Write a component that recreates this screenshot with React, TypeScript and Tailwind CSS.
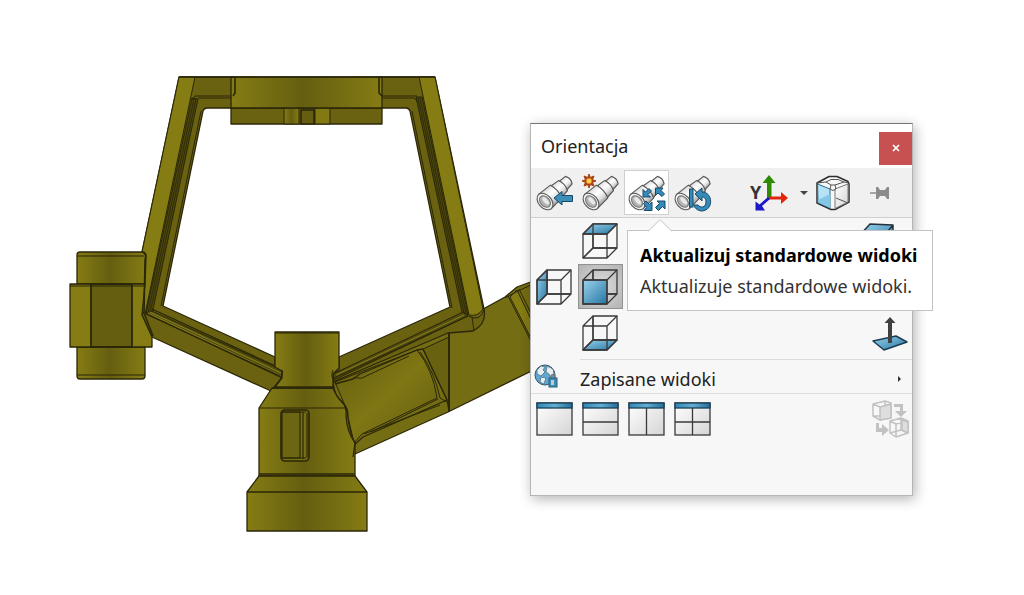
import type { ReactNode } from 'react';

const INK = '#2b2708';

/* Shared gradients, referenced by id from the icons and the model */
const Gradients = () => (
  <svg width="0" height="0" className="absolute" aria-hidden="true">
    <defs>
      <linearGradient id="blue" x1="0" y1="0" x2="1" y2="1">
        <stop offset="0" stopColor="#9bd2ec" />
        <stop offset="1" stopColor="#2476a3" />
      </linearGradient>
      <linearGradient id="bar" x1="0" y1="0" x2="1" y2="0">
        <stop offset="0" stopColor="#2f86b5" />
        <stop offset="0.5" stopColor="#62aed3" />
        <stop offset="1" stopColor="#246f9b" />
      </linearGradient>
      <linearGradient id="silver" x1="0" y1="0" x2="0" y2="1">
        <stop offset="0" stopColor="#dcdcdc" />
        <stop offset="0.4" stopColor="#ffffff" />
        <stop offset="0.7" stopColor="#e2e2e2" />
        <stop offset="1" stopColor="#999999" />
      </linearGradient>
      <linearGradient id="pane" x1="0" y1="0" x2="1" y2="1">
        <stop offset="0" stopColor="#ffffff" />
        <stop offset="1" stopColor="#d5d5d5" />
      </linearGradient>
      <linearGradient id="olive" x1="0" y1="0" x2="1" y2="0">
        <stop offset="0" stopColor="#857c14" />
        <stop offset="0.48" stopColor="#655e10" />
        <stop offset="1" stopColor="#857c14" />
      </linearGradient>
      <linearGradient id="oliveSlope" x1="0" y1="0" x2="1" y2="1">
        <stop offset="0" stopColor="#635c0f" />
        <stop offset="0.5" stopColor="#7f7614" />
        <stop offset="1" stopColor="#655e10" />
      </linearGradient>
    </defs>
  </svg>
);

const Model = () => (
  <svg viewBox="0 0 1024 595" className="block h-auto w-full" role="img" aria-label="Model" stroke={INK} strokeWidth="1.3" strokeLinejoin="round" fill="none">
    {/* Side arm, running behind the panel */}
    <path d="M333 382 L448 331 L485 308 L505 297 L517 287 L560 271 V357 L448 412 L355 454 L340 420Z" fill="#756d13" />
    <path d="M510 297 L517 290 L560 380 V395Z" fill="#857c14" strokeWidth="1" />
    <path d="M508 296 L560 398 M519 289 L560 372 M505 298 L518 291 L535 283" strokeWidth="1" />
    <path d="M531 372 L570 352 V400 L531 420Z" fill="#fff" stroke="none" />
    <path d="M423 349 L449 337 V412 L447 400Z" fill="#686110" strokeWidth="1" />
    <path d="M449 333 V412" strokeWidth="2" />

    {/* Pocket in the arm */}
    <path d="M335 382 L417 350 Q433 370 437 398 L362 434 L354 443 L346 408Z" fill="url(#oliveSlope)" strokeWidth="1" />
    <path d="M335 384 L353 379 L360 374 L417 350 L423 349 L447 400 L363 437 L354 445" />
    <path d="M353 378 H362 L409 356 M420 352 Q435 373 440 398 L447 402 M371 432 L438 399 M364 434 L440 405" strokeWidth="1" />

    {/* Frame: left leg */}
    <path d="M179 77 H234 V108 H207 Q204 108 203 111 L163 306 L275 357 V372 L282 378 L271 391 L152 337 L142 315 L142 252Z" fill="#6a6210" />
    <path d="M179 77 H195 L145 314 L142 312 V252Z" fill="#857c14" strokeWidth="1" />
    <path d="M192 98 L146 313 L152 314 L198 99Z" fill="#4e480d" strokeWidth="1" />
    <path d="M194 99 L148 313 M196 99 L150 313" strokeWidth="0.8" />
    <path d="M234 96 H195 L192 100 M234 98 H198 M201 111 L161 306" strokeWidth="1" />
    <path d="M145 313 L152 311 L282 370 L282 378Z" fill="#514b0d" strokeWidth="1" />
    <path d="M150 312 L281 373 M148 313 L281 376" strokeWidth="1" stroke="#8a8120" />
    <path d="M146 314 L282 377 M152 309 L282 369 L283 376 L271 391" strokeWidth="1.2" />

    {/* Frame: right leg */}
    <path d="M380 77 H435 L484 309 Q487 324 473 331 L448 333 L333 382 V374 L339 370 V357 L450 307 L410 111 Q409 108 406 108 H380Z" fill="#6a6210" />
    <path d="M419 77 H435 L483 309 Q478 317 469 315Z" fill="#857c14" strokeWidth="1" />
    <path d="M416 97 L462 312 L468 315 L422 97Z" fill="#4e480d" strokeWidth="1" />
    <path d="M418 98 L464 313 M420 98 L466 314" strokeWidth="0.8" />
    <path d="M380 96 H417 M380 98 H414 L418 102 M412 111 L452 308" strokeWidth="1" />
    <path d="M333 374 L463 312 L468 316 L334 380Z" fill="#514b0d" strokeWidth="1" />
    <path d="M336 375 L464 315" stroke="#8a8120" strokeWidth="1" />
    <path d="M334 378 L468 316 Q480 322 484 310 M472 317 L474 331" strokeWidth="1" />

    {/* Top block and its lug */}
    <rect x="231" y="108" width="151" height="16" fill="#6a6210" />
    <rect x="284" y="108" width="15" height="16" fill="url(#olive)" strokeWidth="1" />
    <rect x="301" y="110" width="13" height="14" fill="#655e10" strokeWidth="1.6" />
    <rect x="315" y="108" width="15" height="16" fill="#827913" strokeWidth="1" />
    <rect x="231" y="77" width="151" height="31" fill="url(#olive)" />
    <path d="M235 77 V93 L233 96 M379 77 V93 L382 96 M179 77 H435" strokeWidth="1.6" />

    {/* Left boss */}
    <path d="M77 284 V255 Q77 252 80 252 H142 Q146 252 146 256 L145 284Z" fill="url(#olive)" />
    <path d="M77 347 V376 Q77 379 80 379 H142 Q145 379 145 376 V347Z" fill="url(#olive)" />
    <path d="M77 256 H144 M77 375 H145" strokeWidth="1" />
    <path d="M70 284 H145 L142 315 L152 337 V347 H70Z" fill="#857c14" />
    <rect x="91" y="284" width="41" height="63" fill="#655e10" strokeWidth="1.8" />
    <path d="M70 286 H145" strokeWidth="1" />
    <path d="M142 252 Q147 253 145 260 L144 313 L153 336" strokeWidth="1.6" />

    {/* Centre body */}
    <path d="M275 332 H339 V368 L333 374 L333 387 H275 L282 378 V371 L275 367Z" fill="url(#olive)" />
    <path d="M275 333 H339 M282 370 Q284 375 279 381 M333 370 Q330 376 335 383" strokeWidth="1" />
    <path d="M272 388 H333 Q336 396 342 402 Q347 407 346 416 Q347 432 355 443 V476 H259 V408Z" fill="url(#olive)" />
    <path d="M259 408 H345 M333 385 Q335 396 342 402 Q349 408 348 418 Q350 434 355 443 L353 457" strokeWidth="1.2" />
    <path d="M259 476 H355 L367 492 V531 H247 V492Z" fill="url(#olive)" />
    <path d="M272 388 H333 M259 474 H355 M247 492 H367" strokeWidth="1.7" />

    {/* Slot */}
    <rect x="281" y="410" width="28" height="51" rx="4" fill="#776f13" strokeWidth="1.6" />
    <rect x="282" y="412" width="18" height="46" fill="#6c6511" strokeWidth="1.2" />
    <path d="M303 412 V459 M307 413 V458 M282 412 H306 M282 458 H306" strokeWidth="1.2" />
  </svg>
);

const Icon = ({ children, className = 'size-[38px]' }: { children: ReactNode; className?: string }) => (
  <svg viewBox="0 0 38 38" className={className} aria-hidden="true">
    {children}
  </svg>
);

const Scope = () => (
  <g transform="translate(9 27.500) rotate(-42)" stroke="#555" strokeWidth="1.1" strokeLinejoin="round">
    <path d="M23 -5.500 L32 -5 Q35 0 32 5 L23 6Z" fill="url(#silver)" />
    <path d="M14 -7.500 L24 -6.500 Q27 0 24 7 L14 8Z" fill="url(#silver)" />
    <path d="M0 -9.500 L15 -8.500 Q18 0 15 8.500 L0 9.500Z" fill="url(#silver)" />
    <ellipse rx="6.500" ry="9.500" fill="#f1f1f1" />
    <ellipse rx="4.500" ry="6.500" fill="#b4b4b4" stroke="#777" />
    <ellipse cx="1" rx="2" ry="4.500" fill="#e9e9e9" stroke="none" />
  </g>
);

const PreviousViewIcon = () => (
  <Icon>
    <Scope />
    <path d="M18 24 L26 17.500 V21.500 H36.500 V27.500 H26 V31Z" fill="#3d8fba" stroke="#174a68" />
  </Icon>
);

const NewViewIcon = () => (
  <Icon>
    <Scope />
    <path d="M7 0 L8.300 3.500 L12 2 L10.500 5.700 L14 7 L10.500 8.300 L12 12 L8.300 10.500 L7 14 L5.700 10.500 L2 12 L3.500 8.300 L0 7 L3.500 5.700 L2 2 L5.700 3.500Z" fill="#a83f14" stroke="#a83f14" />
    <circle cx="7" cy="7" r="2.700" fill="#ffd052" stroke="#e08a24" />
  </Icon>
);

const UpdateViewsIcon = () => (
  <Icon>
    <Scope />
    <g fill="#348ab8" stroke="#174a68" strokeWidth="1">
      <path d="M15 23 V15.500 L17.500 18 L21 14.500 L23.500 17 L20 20.500 L22.500 23Z" />
      <path d="M27.500 14 H35 L33 16.500 L36.500 20 L34 22.500 L30 19 L27.500 21.500Z" />
      <path d="M15.500 29.500 L18 27 L21.500 30.500 L24 28 V36.500 H16 L18.500 33.500Z" />
      <path d="M37 27 V35 L34.500 32.500 L30.500 36.500 L27.500 33.500 L31.500 29.500 L29 27Z" />
    </g>
  </Icon>
);

const ResetViewsIcon = () => (
  <Icon>
    <Scope />
    <rect x="15.500" y="15" width="3.500" height="18" fill="#348ab8" stroke="#174a68" />
    <path d="M21 20 L28 14 V18 C39 18 40 36 28 37 C23 37 20 33 20 31 H24 C26 34 32 34 32 28 C32 24 30 23 28 23 V27Z" fill="#348ab8" stroke="#174a68" />
  </Icon>
);

const AxisIcon = () => (
  <Icon>
    <text x="0" y="25" fontSize="18" fontWeight="700" fill="#333">Y</text>
    <path d="M17 25 V9 H12.500 L19 1 L25.500 9 H21.500 V25Z" fill="#2f8a00" />
    <path d="M19 22.500 H31 V18 L38 24 L31 30 V25.500 H19Z" fill="#e3260b" />
    <path d="M18 23 L20 25 L12 32 L15 36.500 H5.500 V27.500 L9.500 30.500Z" fill="#1a1ac8" />
  </Icon>
);

const ViewSelectorIcon = () => (
  <Icon>
    <path d="M3 9 L15 2.500 H23 L34 7.500 L35 10 V28 L21 35.500 H17 L3 29Z" fill="#f7f7f7" stroke="#2d2d2d" strokeWidth="1.500" strokeLinejoin="round" />
    <path d="M3.500 10 L16 15 V34 L4 28.500Z" fill="#b6e2f5" stroke="#286b8b" />
    <path d="M4 26 L16 20 V34 L4 28.500Z" fill="#83c6e5" />
    <path d="M21 15 L34 10 V28 L21 34.500Z" fill="url(#pane)" stroke="#777" />
    <path d="M16 15 L17 11 H21 L22 15 L19 16.500Z M3.500 9 L12 8 L17 11 M21 11 L30 8 L34.500 9 M12 8 L17 5.500 H24 L30 8 M22 24 L34 29" fill="none" stroke="#555" />
  </Icon>
);

const PinIcon = () => (
  <svg viewBox="0 0 20 14" className="h-[14px] w-[20px]" aria-hidden="true">
    <path d="M0 7 H7" stroke="#8b8b8b" strokeWidth="1.500" />
    <path d="M6 1 H8 L10 4 H15 L17 1 H19 V13 H17 L15 10 H10 L8 13 H6Z" fill="#8b8b8b" />
  </svg>
);

/* Wireframe cube with one face filled; a solid front hides the edges behind it */
const CubeIcon = ({ face, solid }: { face: string; solid?: boolean }) => (
  <Icon>
    <g stroke="#3a3a3a" strokeWidth="1.300" strokeLinejoin="round" fill="none">
      <path d="M11 2 H35 V26 H11Z M1 36 L11 26" />
      {!solid && <path d={face} fill="url(#blue)" />}
      <path d="M11 2 V26 H35 M1 36 L11 26" />
      {solid && <path d={face} fill="url(#blue)" />}
      <path d="M1 12 H25 V36 H1Z M1 12 L11 2 M25 12 L35 2 M25 36 L35 26" />
    </g>
  </Icon>
);

const TOP = 'M1 12 L11 2 H35 L25 12Z';
const LEFT = 'M1 12 L11 2 V26 L1 36Z';
const FRONT = 'M1 12 H25 V36 H1Z';
const BOTTOM = 'M1 36 L11 26 H35 L25 36Z';

const NormalToIcon = () => (
  <Icon>
    <path d="M2 27 L25 22 L36 28 L13 36Z" fill="url(#blue)" stroke="#1c3d50" strokeWidth="1.500" strokeLinejoin="round" />
    <path d="M17 29 V9 H13.500 L19 3 L24.500 9 H21 V29Z" fill="#404040" />
  </Icon>
);

const GlobeLockIcon = () => (
  <svg viewBox="0 0 24 24" className="size-6" aria-hidden="true">
    <circle cx="11" cy="11" r="10" fill="#5ea9d3" stroke="#31566b" />
    <path d="M3 6 L7 2 L11 3 L9 6 L11 8 L7 12 L3 10Z M13 2 L19 5 L20 10 L17 14 L15 10 L12 8Z M7 13 L12 14 L10 20 L6 18Z" fill="#e7eef1" stroke="#52717f" strokeWidth="0.800" />
    <path d="M17 15 V12 Q19 9 21 12 V15" fill="none" stroke="#777" strokeWidth="1.500" />
    <rect x="15" y="14" width="8" height="9" fill="#3b8db7" stroke="#285f7d" />
    <rect x="17" y="16" width="3" height="5" fill="#c9c9c9" />
  </svg>
);

const ViewportIcon = ({ split }: { split: string }) => (
  <Icon>
    <rect x="1" y="3" width="35" height="32" fill="url(#pane)" stroke="#3a3a3a" strokeWidth="1.300" />
    <rect x="1" y="3" width="35" height="5" fill="url(#bar)" stroke="#1c3f54" strokeWidth="1.300" />
    <path d={split} stroke="#3a3a3a" strokeWidth="1.300" />
  </Icon>
);

const LinkViewsIcon = () => (
  <Icon>
    <g fill="none" stroke="#c2c2c2" strokeWidth="1.500" strokeLinejoin="round">
      <path d="M2 4 L14 1 L20 3 V18 L9 20 L2 16Z M2 4 L9 7 L20 4 M14 1 V16 L2 16" />
      <path d="M9 7 L20 4 V18 L9 20Z" fill="#dedede" />
      <path d="M19 21 L30 18 L37 21 V33 L25 37 L19 33Z M19 21 L25 24 L37 21 M25 24 V37 M30 18 V30 L19 33 M30 30 L37 33" />
      <path d="M31 20 L37 22 V33 L31 30Z" fill="#dedede" />
    </g>
    <path d="M23 4 H32 V11 H36 L30 17 L24 11 H29 V7 H23Z M5 23 H8 V28 H11 V24 L18 30 L11 36 V32 H5Z" fill="#c2c2c2" />
  </Icon>
);

const ToolButton = ({ label, active, children }: { label: string; active?: boolean; children: ReactNode }) => (
  <button
    type="button"
    aria-label={label}
    className={
      active
        ? 'flex size-[45px] shrink-0 items-center justify-center border border-[#cfcfcf] bg-white'
        : 'flex size-[45px] shrink-0 items-center justify-center'
    }
  >
    {children}
  </button>
);

const Tooltip = () => (
  <div role="tooltip" className="absolute top-[106px] left-24 z-10 border border-[#c3c3c3] bg-white pt-[9px] pr-[14px] pb-2 pl-3 text-lg leading-[31px] whitespace-nowrap">
    <svg viewBox="0 0 24 13" className="absolute -top-3 left-5 h-[13px] w-6" aria-hidden="true">
      <path d="M0 12.500 L12 0.500 L24 12.500" fill="#fff" stroke="#c3c3c3" />
    </svg>
    <p className="font-bold text-black">Aktualizuj standardowe widoki</p>
    <p className="text-[#333]">Aktualizuje standardowe widoki.</p>
  </div>
);

const OrientationPanel = () => (
  <section
    aria-labelledby="orientation-title"
    className="absolute top-[123px] left-[530px] w-[383px] border border-[#b5b5b5] border-t-[#757575] bg-[#f7f7f7] shadow-[2px_3px_12px_rgba(0,0,0,0.3)]"
  >
    <header className="flex h-11 items-center justify-between bg-white pl-[10px]">
      <h1 id="orientation-title" className="text-lg text-[#222]">Orientacja</h1>
      <button type="button" aria-label="Zamknij" className="mt-1 flex size-[33px] items-center justify-center bg-[#c75050]">
        <svg viewBox="0 0 8 8" className="size-2" aria-hidden="true">
          <path d="M1 1 L7 7 M7 1 L1 7" stroke="#fff" strokeWidth="1.700" />
        </svg>
      </button>
    </header>

    <div className="flex h-[50px] items-center gap-px border-b border-[#cfcfcf] bg-[#f0f0f0] pl-px">
      <ToolButton label="Poprzedni widok"><PreviousViewIcon /></ToolButton>
      <ToolButton label="Nowy widok"><NewViewIcon /></ToolButton>
      <ToolButton label="Aktualizuj standardowe widoki" active><UpdateViewsIcon /></ToolButton>
      <ToolButton label="Resetuj standardowe widoki"><ResetViewsIcon /></ToolButton>
      <div className="ml-auto flex items-center pr-[22px]">
        <button type="button" aria-label="Oś" className="flex items-center gap-3">
          <AxisIcon />
          <svg viewBox="0 0 8 4" className="h-1 w-2" aria-hidden="true"><path d="M0 0 H8 L4 4Z" fill="#444" /></svg>
        </button>
        <button type="button" aria-label="Selektor widoku" className="ml-[6px]">
          <ViewSelectorIcon />
        </button>
        <button type="button" aria-label="Przypnij" className="ml-[18px]"><PinIcon /></button>
      </div>
    </div>

    <div className="flex justify-between pl-px">
      <div className="grid grid-cols-[45px_45px] gap-px">
        <div className="col-start-2"><ToolButton label="Góra"><CubeIcon face={TOP} /></ToolButton></div>
        <div className="col-start-1"><ToolButton label="Lewo"><CubeIcon face={LEFT} /></ToolButton></div>
        <button type="button" aria-label="Przód" aria-pressed="true" className="flex size-[45px] items-center justify-center border border-[#929292] bg-[#bdbdbd] bg-radial from-[#dedede] to-[#b3b3b3]">
          <CubeIcon face={FRONT} solid />
        </button>
        <div className="col-start-2"><ToolButton label="Dół"><CubeIcon face={BOTTOM} /></ToolButton></div>
      </div>
      <div className="flex flex-col items-end justify-between">
        <div className="pr-[14px]">
          <ToolButton label="Izometryczny">
            <Icon>
              <path d="M2 14 L13 2 L36 3 L27 14Z M27 14 L36 3 V26 L27 36Z M2 14 H27 V36 H2Z" fill="url(#blue)" stroke="#24313a" strokeWidth="1.500" strokeLinejoin="round" />
            </Icon>
          </ToolButton>
        </div>
        <ToolButton label="Normalny do"><NormalToIcon /></ToolButton>
      </div>
    </div>

    <div className="mt-1 flex h-[35px] items-center border-b border-[#dcdcdc] pl-[3px]">
      <GlobeLockIcon />
      <button type="button" className="ml-[22px] flex h-full flex-1 items-center justify-between border-t border-[#dcdcdc] pt-1 pr-[11px] text-lg text-[#222]">
        Zapisane widoki
        <svg viewBox="0 0 3 6" className="h-[6px] w-[3px]" aria-hidden="true"><path d="M0 0 V6 L3 3Z" fill="#333" /></svg>
      </button>
    </div>

    <div className="flex gap-px pt-[2px] pb-[54px] pl-px">
      <ToolButton label="Jeden widok"><ViewportIcon split="" /></ToolButton>
      <ToolButton label="Dwa widoki - poziomo"><ViewportIcon split="M1 22 H36" /></ToolButton>
      <ToolButton label="Dwa widoki - pionowo"><ViewportIcon split="M18.500 8 V35" /></ToolButton>
      <ToolButton label="Cztery widoki"><ViewportIcon split="M1 22 H36 M18.500 8 V35" /></ToolButton>
      <div className="ml-auto"><ToolButton label="Połącz widoki"><LinkViewsIcon /></ToolButton></div>
    </div>

    <Tooltip />
  </section>
);

const App = () => (
  <main className="relative min-h-screen w-full overflow-hidden bg-white font-['Noto_Sans','Open_Sans',sans-serif]">
    <Gradients />
    <Model />
    <OrientationPanel />
  </main>
);

export default App;
